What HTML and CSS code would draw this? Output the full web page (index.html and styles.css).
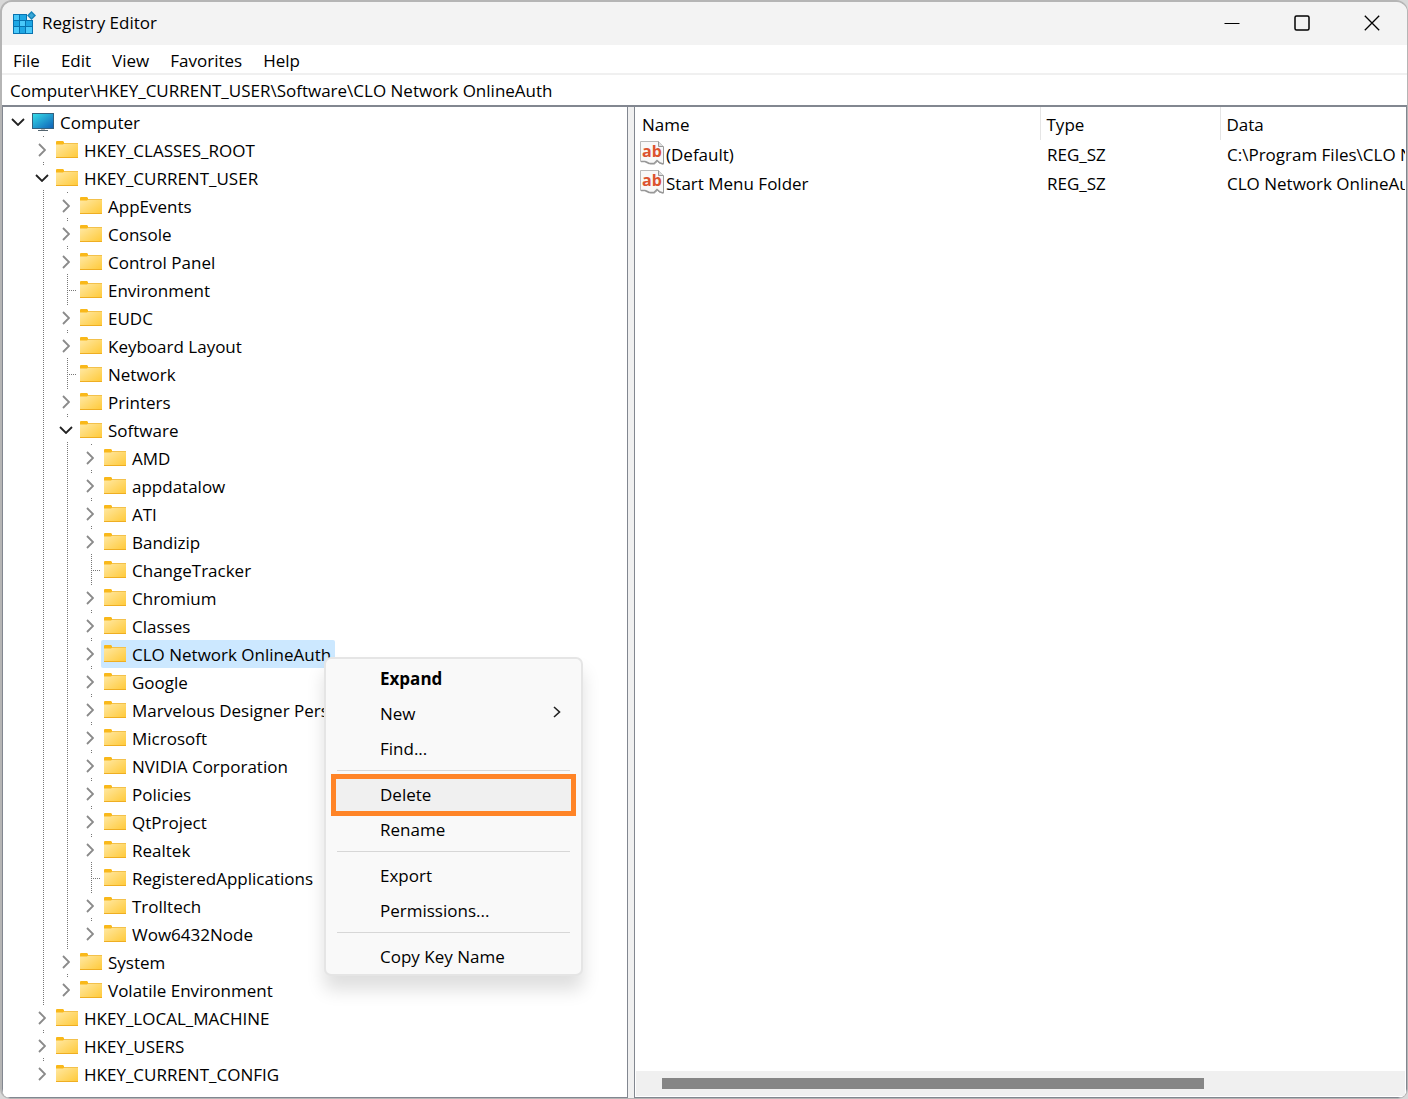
FILE: index.html
```html
<!DOCTYPE html>
<html lang="en">
<head>
<meta charset="utf-8">
<title>Registry Editor</title>
<link rel="stylesheet" href="styles.css">
</head>
<body>
<svg class="defs" aria-hidden="true">
  <defs>
    <linearGradient id="folder-fill" x1="0" y1="0" x2="1" y2="1"><stop offset="0" stop-color="#ffe9a6"/><stop offset="1" stop-color="#ffc937"/></linearGradient>
    <linearGradient id="screen-fill" x1="0" y1="0" x2="1" y2="1"><stop offset="0" stop-color="#35dbe8"/><stop offset="1" stop-color="#0f62b8"/></linearGradient>
    <symbol id="folder" viewBox="0 0 22 18"><path d="M0 1q0-1 1-1h6l1 1v3H0z" fill="#f9b81a"/><path d="M0 3.500h7l2-1.500h13v15H0z" fill="url(#folder-fill)"/><path d="M8 2.500h14" stroke="#f3c14b"/><path d="M0 16.500h22" stroke="#efae22"/></symbol>
    <symbol id="right" viewBox="0 0 8 14"><path d="M1 1l6 6-6 6" fill="none" stroke="#8a8a8a" stroke-width="1.800"/></symbol>
    <symbol id="down" viewBox="0 0 14 8"><path d="M1 1l6 6 6-6" fill="none" stroke="#222" stroke-width="1.800"/></symbol>
    <symbol id="string" viewBox="0 0 24 24"><path d="M.5 .5h18l5 5v17.500l-3-.5-3-2-3 2.500h-4l-4-2.500H.5z" fill="#f8f8f8" stroke="#b9b9b9"/><path d="M1 20.500h4l4 2h5l3-3 3 2.500 3.500 1" fill="none" stroke="#979797" stroke-width="1.500"/><path d="M18.500 .5v5h5" fill="#ddd" stroke="#999"/><path d="M23.500 6v17" stroke="#999"/></symbol>
  </defs>
</svg>
<div class="window">
  <header class="titlebar">
    <svg class="app-icon" width="24" height="24" viewBox="0 0 24 24" aria-hidden="true"><path d="M1 3h14v6h6v14H1z" fill="#0873b0"/><path d="M2 4h5v5H2zM8 10h5v5H8zM2 16h5v6H2zM14 16h6v6h-6z" fill="#49c9fa"/><path d="M8 4h6v5H8zM2 10h5v5H2zM14 10h6v5h-6zM8 16h5v6H8z" fill="#1ea7e4"/><path d="M19.500 0l4.500 4.500L19.500 9 15 4.500z" fill="#1683b9"/><path d="M19.500 2l2.500 2.500L19.500 7 17 4.500z" fill="#39a8d8"/></svg>
    <h1>Registry Editor</h1>
    <div class="controls">
      <button type="button" aria-label="Minimize"><svg width="16" height="16" viewBox="0 0 16 16"><path d="M.5 8.500h15"/></svg></button>
      <button type="button" aria-label="Maximize"><svg width="16" height="16" viewBox="0 0 16 16"><rect x="1" y="1" width="14" height="14" rx="1.500" stroke-width="1.500"/></svg></button>
      <button type="button" aria-label="Close"><svg width="16" height="16" viewBox="0 0 16 16"><path d="M.8.8l14.400 14.400M15.200.8L.8 15.200" stroke-width="1.300"/></svg></button>
    </div>
  </header>
  <nav class="menubar" aria-label="Main menu">
    <button type="button">File</button><button type="button">Edit</button><button type="button">View</button><button type="button">Favorites</button><button type="button">Help</button>
  </nav>
  <input class="address" type="text" aria-label="Address" value="Computer\HKEY_CURRENT_USER\Software\CLO Network OnlineAuth">
  <main class="panes">
    <section class="tree-pane" aria-label="Keys">
      <ul class="tree" id="tree"></ul>
    </section>
    <div class="splitter"></div>
    <section class="values-pane" aria-label="Values">
      <table class="values">
        <colgroup><col class="col-name"><col class="col-type"><col></colgroup>
        <thead><tr><th scope="col">Name</th><th scope="col">Type</th><th scope="col">Data</th></tr></thead>
        <tbody>
          <tr><td class="name"><div><span class="string-icon"><svg width="24" height="24" aria-hidden="true"><use href="#string"/></svg><b>ab</b></span>(Default)</div></td><td>REG_SZ</td><td>C:\Program Files\CLO Network OnlineAuth</td></tr>
          <tr><td class="name"><div><span class="string-icon"><svg width="24" height="24" aria-hidden="true"><use href="#string"/></svg><b>ab</b></span>Start Menu Folder</div></td><td>REG_SZ</td><td>CLO Network OnlineAuth</td></tr>
        </tbody>
      </table>
      <div class="scrollbar"><div class="thumb"></div></div>
    </section>
  </main>
</div>
<template id="context-menu">
  <div class="context" role="menu">
    <button type="button" role="menuitem" class="default">Expand</button>
    <button type="button" role="menuitem">New<svg width="8" height="12" viewBox="0 0 8 12" aria-hidden="true"><path d="M1 1l5.500 5L1 11"/></svg></button>
    <button type="button" role="menuitem">Find...</button>
    <hr>
    <button type="button" role="menuitem" class="marked">Delete</button>
    <button type="button" role="menuitem">Rename</button>
    <hr>
    <button type="button" role="menuitem">Export</button>
    <button type="button" role="menuitem">Permissions...</button>
    <hr>
    <button type="button" role="menuitem">Copy Key Name</button>
  </div>
</template>
<script src="tree.js"></script>
</body>
</html>
```
FILE: tree.js
```js
// A key is [name, state, children]; state is "open", "closed" or "leaf".
const closed = name => [name, "closed"];
const leaf = name => [name, "leaf"];

const software = [
  ...["AMD", "appdatalow", "ATI", "Bandizip"].map(closed),
  leaf("ChangeTracker"),
  ...["Chromium", "Classes", "CLO Network OnlineAuth", "Google", "Marvelous Designer Personal",
    "Microsoft", "NVIDIA Corporation", "Policies", "QtProject", "Realtek"].map(closed),
  leaf("RegisteredApplications"), closed("Trolltech"), closed("Wow6432Node")
];
const currentUser = [
  closed("AppEvents"), closed("Console"), closed("Control Panel"), leaf("Environment"),
  closed("EUDC"), closed("Keyboard Layout"), leaf("Network"), closed("Printers"),
  ["Software", "open", software], closed("System"), closed("Volatile Environment")
];
const root = ["Computer", "open", [
  closed("HKEY_CLASSES_ROOT"), ["HKEY_CURRENT_USER", "open", currentUser],
  closed("HKEY_LOCAL_MACHINE"), closed("HKEY_USERS"), closed("HKEY_CURRENT_CONFIG")
]];
const selected = "CLO Network OnlineAuth";

const chevrons = {
  open: '<svg width="14" height="8" aria-hidden="true"><use href="#down"/></svg>',
  closed: '<svg width="8" height="14" aria-hidden="true"><use href="#right"/></svg>'
};
const folder = '<svg class="icon" width="22" height="18" aria-hidden="true"><use href="#folder"/></svg>';
const computer = '<svg class="icon" width="22" height="18" viewBox="0 0 22 18" aria-hidden="true"><path d="M0 0h22v16H0z" fill="#35617e"/><path d="M1 1h20v14H1z" fill="url(#screen-fill)"/><path d="M9 16h4v1H9z" fill="#bbb"/><path d="M6 17.500h10" stroke="#53646e"/></svg>';

function build([name, state, children], isRoot) {
  const item = document.createElement("li");
  const toggle = state === "leaf"
    ? '<span class="stub"></span>'
    : `<button type="button" class="toggle" aria-label="Toggle ${name}">${chevrons[state]}</button>`;
  item.innerHTML = `<div class="row">${toggle}<span class="key">${isRoot ? computer : folder}${name}</span></div>`;
  if (name === selected) {
    item.classList.add("selected");
    item.append(document.getElementById("context-menu").content.cloneNode(true));
  }
  if (children) {
    const list = document.createElement("ul");
    list.append(...children.map(child => build(child, false)));
    item.append(list);
  }
  return item;
}
document.getElementById("tree").append(build(root, true));
```
FILE: styles.css
```css
* { box-sizing: border-box; }
body {
  margin: 0;
  background: #d8d8d8;
  color: #000;
  font: 17px/28px "Open Sans", "Noto Sans", sans-serif;
}
button, input { font: inherit; color: inherit; border: 0; background: none; padding: 0; }
ul { list-style: none; margin: 0; padding: 0; }
.defs { position: absolute; width: 0; height: 0; }

.window {
  display: flex;
  flex-direction: column;
  min-height: 100vh;
  overflow: hidden;
  background: #f0f0f0;
  border: solid #b5b5b5;
  border-width: 2px 1px 1px 2px;
  border-radius: 12px 12px 10px 10px;
}
.titlebar { display: flex; align-items: center; height: 43px; padding: 0 0 2px 10px; background: #f3f3f3; }
.titlebar h1 { flex: 1; margin: 0 0 0 6px; font-size: 17px; font-weight: 400; }
.controls { display: flex; }
.controls button { display: grid; place-items: center; width: 70px; height: 40px; }
.controls svg { fill: none; stroke: #000; }

.menubar { display: flex; gap: 21px; height: 28px; padding: 2px 11px 0; background: #fff; }
.address { width: 100%; height: 32px; margin-top: 2px; padding: 1px 8px 0; background: #fff; border-bottom: 2px solid #828790; }

.panes { flex: 1; display: grid; grid-template-columns: 626px 6px minmax(0, 1fr); }
.tree-pane { padding: 1px 0 0 3px; background: #fff; border: solid #828790; border-width: 0 1px 1px; }
.tree-pane, .values-pane { min-width: 0; }
.tree ul { margin-left: 24px; }
/* Dotted guide that joins siblings, one dot in every two pixels. */
.tree ul > li { background: repeating-linear-gradient(#777 0 1px, transparent 1px 2px) 13px 0 / 1px 100% no-repeat; }
.tree ul > li:last-child { background-size: 1px 1px; }
.row { display: flex; align-items: center; height: 28px; white-space: nowrap; }
.toggle { display: grid; place-items: center; flex: none; width: 23px; height: 24px; padding-left: 1px; background: #fff; }
.stub { flex: none; width: 23px; height: 1px; background: repeating-linear-gradient(90deg, #777 0 1px, transparent 1px 2px) 13px 0 / 10px 1px no-repeat; }
.key { display: flex; align-items: flex-start; height: 28px; padding: 0 4px 0 3px; border-radius: 2px; line-height: 30px; }
.icon { margin: 5px 6px 0 0; }
.selected { position: relative; }
.selected .key { background: #cce8ff; }

.context {
  position: absolute;
  z-index: 1;
  top: 17px;
  left: 246px;
  width: 259px;
  padding-top: 2px;
  background: #f9f9f9;
  border: 2px solid #e5e5e5;
  border-radius: 7px;
  box-shadow: 0 14px 18px rgba(0, 0, 0, .13);
}
.context button { position: relative; display: flex; align-items: center; justify-content: space-between; width: calc(100% - 16px); height: 35px; margin: 0 8px; padding: 0 12px 0 46px; }
.context svg { margin-bottom: 3px; fill: none; stroke: #222; stroke-width: 1.600; }
.context .default { font-weight: 700; }
.context .marked { background: #f0f0f0; }
.context .marked::after { content: ""; position: absolute; inset: -3px; bottom: -4px; border: 5px solid #ff8427; }
.context hr { height: 1px; margin: 4px 11px 6px; border: 0; background: #d7d7d7; }

.values-pane { display: flex; flex-direction: column; padding: 0 1px 1px; background: #fff; border: solid #828790; border-width: 0 1px 1px; }
.values { width: 100%; table-layout: fixed; border-collapse: collapse; line-height: 29px; }
.col-name { width: 404px; }
.col-type { width: 180px; }
.values th { height: 33px; padding: 2px 6px 0; border-right: 1px solid #e5e5e5; font-weight: 400; text-align: left; }
.values th:last-child { border-right: 0; }
.values td { height: 29px; padding: 0 0 0 7px; overflow: hidden; white-space: nowrap; }
.values .name { padding-left: 4px; }
.name div { display: flex; align-items: flex-start; gap: 2px; }
.string-icon { position: relative; height: 24px; width: 24px; margin-top: 1px; }
.string-icon svg { display: block; }
.string-icon b { position: absolute; top: 0; left: 2px; color: #dc5430; font-size: 16px; line-height: 20px; }
.scrollbar { height: 25px; margin-top: auto; padding: 7px 0 7px 26px; background: #f0f0f0; }
.thumb { width: 73%; height: 11px; background: #868686; }
```
